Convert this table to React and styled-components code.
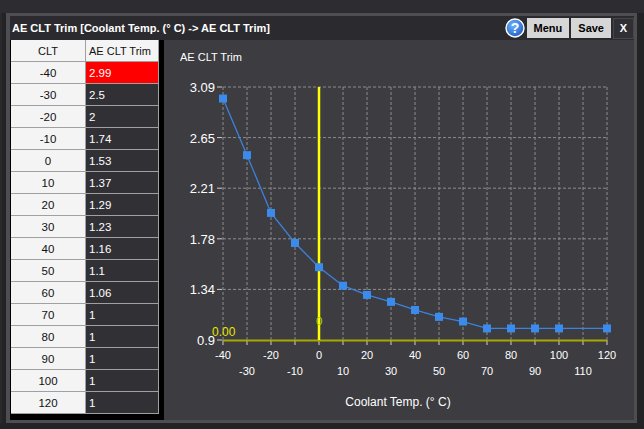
import React from "react";
import styled, { createGlobalStyle } from "styled-components";

const GlobalStyle = createGlobalStyle`
	html, body {
		margin: 0;
		padding: 0;
		background: #232325;
	}
	body {
		font-family: "Liberation Sans", Arial, sans-serif;
	}
`;

const rows = [
	[-40, 2.99],
	[-30, 2.5],
	[-20, 2],
	[-10, 1.74],
	[0, 1.53],
	[10, 1.37],
	[20, 1.29],
	[30, 1.23],
	[40, 1.16],
	[50, 1.1],
	[60, 1.06],
	[70, 1],
	[80, 1],
	[90, 1],
	[100, 1],
	[120, 1],
];

const yTicks = ["3.09", "2.65", "2.21", "1.78", "1.34", "0.9"];
const xTicks = [-40, -30, -20, -10, 0, 10, 20, 30, 40, 50, 60, 70, 80, 90, 100, 110, 120];

const xPos = (t) => 319 + t * 2.4;
const yPos = (v) => 340 - ((v - 0.9) / 2.19) * 253;

function App() {
	return (
		<Screen>
			<GlobalStyle />
			<TopStrip />
			<Body>
				<Window>
					<TitleBar>
						<Title>AE CLT Trim [Coolant Temp. (° C) -&gt; AE CLT Trim]</Title>
						<HelpIcon />
						<Button>Menu</Button>
						<Button>Save</Button>
						<CloseButton>X</CloseButton>
					</TitleBar>
					<Content>
						<TablePanel>
							<Grid>
								<HeadCell>CLT</HeadCell>
								<HeadCell left>AE CLT Trim</HeadCell>
								{rows.map(([t, v], i) => (
									<React.Fragment key={t}>
										<KeyCell>{t}</KeyCell>
										<ValueCell selected={i === 0}>{v}</ValueCell>
									</React.Fragment>
								))}
							</Grid>
						</TablePanel>
						<ChartPanel>
							<ChartTitle>AE CLT Trim</ChartTitle>
							<Chart />
						</ChartPanel>
					</Content>
				</Window>
			</Body>
		</Screen>
	);
}

function HelpIcon() {
	return (
		<Help width="20" height="20" viewBox="0 0 20 20">
			<defs>
				<radialGradient id="hg" cx="40%" cy="35%" r="70%">
					<stop offset="0%" stopColor="#6fb4ff" />
					<stop offset="100%" stopColor="#1c5cc4" />
				</radialGradient>
			</defs>
			<circle cx="10" cy="10" r="9" fill="url(#hg)" stroke="#ffffff" strokeWidth="1.4" />
			<text x="10" y="15" textAnchor="middle" fontSize="14" fontWeight="bold" fill="#fff" fontFamily="Liberation Sans, Arial, sans-serif">?</text>
		</Help>
	);
}

function Chart() {
	const pts = rows.map(([t, v]) => [xPos(t), yPos(v)]);
	return (
		<Plot width="470" height="346" viewBox="164 74 470 346">
			{yTicks.map((label, i) => {
				const y = 87 + i * 50.6;
				return (
					<g key={label}>
						{i < 5 && <line x1="223" x2="607" y1={y} y2={y} stroke="#8d8d8d" strokeDasharray="3 2" />}
						<line x1="217" x2="222" y1={y} y2={y} stroke="#d0d0d0" />
						<text x="215" y={y + 5} textAnchor="end" fontSize="13" fill="#fff">{label}</text>
					</g>
				);
			})}
			{xTicks.map((t, i) => {
				const x = xPos(t);
				return (
					<g key={t}>
						<line x1={x} x2={x} y1="87" y2="340" stroke="#8d8d8d" strokeDasharray="3 2" />
						<line x1={x} x2={x} y1="340" y2="345" stroke="#d0d0d0" />
						<text x={x} y={i % 2 === 0 ? 359 : 375} textAnchor="middle" fontSize="11" fill="#fff">{t}</text>
					</g>
				);
			})}
			<line x1="223" x2="607" y1="340.5" y2="340.5" stroke="#a8a800" strokeWidth="2" />
			<line x1="319" x2="319" y1="87" y2="340" stroke="#ffff00" strokeWidth="2.5" />
			<text x="212" y="336" fontSize="12" fill="#e6e600">0.00</text>
			<text x="316" y="325" fontSize="11.5" fill="#b8d400">0</text>
			<polyline points={pts.map((p) => p.join(",")).join(" ")} fill="none" stroke="#3d82dc" strokeWidth="1.3" />
			{pts.map(([x, y]) => (
				<rect key={x} x={x - 4} y={y - 4} width="8" height="8" fill="#3b8bec" />
			))}
			<text x="398" y="406" textAnchor="middle" fontSize="12" fill="#fff">Coolant Temp. (° C)</text>
		</Plot>
	);
}

const Screen = styled.div`
	width: 644px;
	height: 429px;
	overflow: hidden;
	background: #232325;
`;
const TopStrip = styled.div`
	height: 13px;
	background: #2d2d31;
`;
const Body = styled.div`
	display: flex;
	padding-left: 6px;
	background: linear-gradient(to right, #2a2a2c 0 2px, #232325 2px);
`;
const Window = styled.div`
	width: 624px;
	height: 404px;
	border: 3px solid #4d4d52;
	border-left-width: 4px;
	display: flex;
	flex-direction: column;
	background: #3c3c41;
`;
const TitleBar = styled.div`
	height: 24px;
	display: flex;
	align-items: center;
	padding-left: 2px;
	background: #2b2b2f;
`;
const Title = styled.div`
	flex: 1;
	color: #fff;
	font-weight: bold;
	font-size: 11px;
	white-space: nowrap;
`;
const Help = styled.svg`
	margin-right: 2px;
`;
const Button = styled.div`
	height: 20px;
	padding: 0 7px;
	margin-right: 2px;
	display: flex;
	align-items: center;
	background: #d6d6d6;
	color: #000;
	font-weight: bold;
	font-size: 11px;
`;
const CloseButton = styled.div`
	width: 19px;
	height: 19px;
	display: flex;
	align-items: center;
	justify-content: center;
	border: 1px solid #46464b;
	background: #2f2f34;
	color: #fff;
	font-weight: bold;
	font-size: 11px;
`;
const Content = styled.div`
	flex: 1;
	display: flex;
`;
const TablePanel = styled.div`
	width: 153px;
	padding-left: 1px;
	background: #000;
`;
const Grid = styled.div`
	display: grid;
	grid-template-columns: 74px 72px;
	grid-auto-rows: 21px;
	gap: 1px;
	width: 147px;
	padding: 0 1px 1px 0;
	box-sizing: content-box;
	background: #a0a0a0;
`;
const Cell = styled.div`
	display: flex;
	align-items: center;
	font-size: 11.5px;
	white-space: nowrap;
`;
const HeadCell = styled(Cell)`
	background: #f4f4f4;
	color: #111;
	justify-content: ${(p) => (p.left ? "flex-start" : "center")};
	padding-left: ${(p) => (p.left ? "3px" : "0")};
	font-size: 11px;
`;
const KeyCell = styled(Cell)`
	background: #f4f4f4;
	color: #111;
	justify-content: center;
`;
const ValueCell = styled(Cell).withConfig({ shouldForwardProp: (p) => p !== "selected" })`
	background: ${(p) => (p.selected ? "#ff0000" : "#313135")};
	color: #fff;
	padding-left: 3px;
`;
const ChartPanel = styled.div`
	flex: 1;
	display: flex;
	flex-direction: column;
`;
const ChartTitle = styled.div`
	height: 34px;
	box-sizing: border-box;
	padding: 11px 0 0 16px;
	color: #fff;
	font-size: 11px;
`;
const Plot = styled.svg`
	display: block;
	font-family: "Liberation Sans", Arial, sans-serif;
`;

export default App;
